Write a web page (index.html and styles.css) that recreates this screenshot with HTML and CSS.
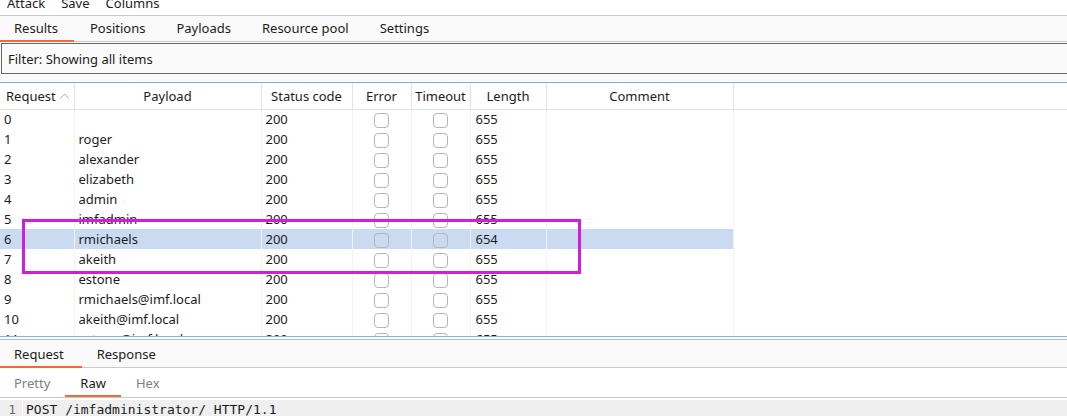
FILE: index.html
```html
<!DOCTYPE html>
<html>
<head>
<meta charset="utf-8">
<link rel="stylesheet" href="styles.css">
</head>
<body>
<div class="menubar">
  <div class="menu-inner">
    <span class="menu-item">Attack</span>
    <span class="menu-item">Save</span>
    <span class="menu-item">Columns</span>
  </div>
</div>
<div class="tabs top-tabs">
  <span class="tab active">Results</span>
  <span class="tab">Positions</span>
  <span class="tab">Payloads</span>
  <span class="tab">Resource pool</span>
  <span class="tab">Settings</span>
</div>
<div class="filter-area">
  <div class="filter">Filter: Showing all items</div>
</div>
<div class="table-wrap">
  <table class="results">
    <colgroup>
      <col class="c-req"><col class="c-pay"><col class="c-status"><col class="c-err"><col class="c-to"><col class="c-len"><col class="c-com"><col>
    </colgroup>
    <thead>
      <tr>
        <th class="left">Request <svg class="sort" width="9" height="6" viewBox="0 0 9 6"><path d="M0.5 5.5 L4.5 1 L8.5 5.5" fill="none" stroke="#a8a8a8" stroke-width="1"/></svg></th>
        <th>Payload</th>
        <th>Status code</th>
        <th>Error</th>
        <th>Timeout</th>
        <th>Length</th>
        <th>Comment</th>
        <th class="filler"></th>
      </tr>
    </thead>
    <tbody>
      <tr><td>0</td><td></td><td>200</td><td class="cb"><span class="box"></span></td><td class="cb"><span class="box"></span></td><td class="len">655</td><td></td><td class="filler"></td></tr>
      <tr><td>1</td><td>roger</td><td>200</td><td class="cb"><span class="box"></span></td><td class="cb"><span class="box"></span></td><td class="len">655</td><td></td><td class="filler"></td></tr>
      <tr><td>2</td><td>alexander</td><td>200</td><td class="cb"><span class="box"></span></td><td class="cb"><span class="box"></span></td><td class="len">655</td><td></td><td class="filler"></td></tr>
      <tr><td>3</td><td>elizabeth</td><td>200</td><td class="cb"><span class="box"></span></td><td class="cb"><span class="box"></span></td><td class="len">655</td><td></td><td class="filler"></td></tr>
      <tr><td>4</td><td>admin</td><td>200</td><td class="cb"><span class="box"></span></td><td class="cb"><span class="box"></span></td><td class="len">655</td><td></td><td class="filler"></td></tr>
      <tr><td>5</td><td>imfadmin</td><td>200</td><td class="cb"><span class="box"></span></td><td class="cb"><span class="box"></span></td><td class="len">655</td><td></td><td class="filler"></td></tr>
      <tr class="selected"><td>6</td><td>rmichaels</td><td>200</td><td class="cb"><span class="box"></span></td><td class="cb"><span class="box"></span></td><td class="len">654</td><td></td><td class="filler"></td></tr>
      <tr><td>7</td><td>akeith</td><td>200</td><td class="cb"><span class="box"></span></td><td class="cb"><span class="box"></span></td><td class="len">655</td><td></td><td class="filler"></td></tr>
      <tr><td>8</td><td>estone</td><td>200</td><td class="cb"><span class="box"></span></td><td class="cb"><span class="box"></span></td><td class="len">655</td><td></td><td class="filler"></td></tr>
      <tr><td>9</td><td>rmichaels@imf.local</td><td>200</td><td class="cb"><span class="box"></span></td><td class="cb"><span class="box"></span></td><td class="len">655</td><td></td><td class="filler"></td></tr>
      <tr><td>10</td><td>akeith@imf.local</td><td>200</td><td class="cb"><span class="box"></span></td><td class="cb"><span class="box"></span></td><td class="len">655</td><td></td><td class="filler"></td></tr>
      <tr><td>11</td><td>estone@imf.local</td><td>200</td><td class="cb"><span class="box"></span></td><td class="cb"><span class="box"></span></td><td class="len">655</td><td></td><td class="filler"></td></tr>
    </tbody>
  </table>
  <div class="mark"></div>
</div>
<div class="tabs bottom-tabs">
  <span class="tab active">Request</span>
  <span class="tab">Response</span>
</div>
<div class="subtabs">
  <span class="subtab muted">Pretty</span>
  <span class="subtab active">Raw</span>
  <span class="subtab muted">Hex</span>
</div>
<div class="code">
  <span class="gutter">1</span>
  <span class="code-text">POST /imfadministrator/ HTTP/1.1</span>
</div>
</body>
</html>
```

FILE: styles.css
```css
* { box-sizing: border-box; }
html, body {
  margin: 0;
  padding: 0;
  background: #ffffff;
  font-family: "Noto Sans", "Open Sans", sans-serif;
  font-size: 12px;
  color: #1c1c1c;
  overflow: hidden;
}
.menubar {
  height: 16px;
  overflow: hidden;
  border-bottom: 1px solid #c9c9c9;
  background: #ffffff;
}
.menu-inner {
  display: flex;
  margin-top: -7px;
  padding-left: 7px;
  gap: 16px;
  line-height: 20px;
  font-size: 13px;
}
.tabs {
  display: flex;
  height: 26px;
  background: #fafafa;
  border-bottom: 1px solid #c9c9c9;
}
.tab {
  display: flex;
  align-items: center;
  padding: 0 15px 0 16px;
  font-size: 13px;
  border-bottom: 2px solid transparent;
  margin-bottom: -1px;
}
.tabs .tab:first-child { padding-left: 14px; padding-right: 16px; }
.tab.active { border-bottom-color: #f26a3a; }
.filter-area {
  background: #fafafa;
  padding: 1px 0 8px 1px;
  border-bottom: 1px solid #7fb0df;
}
.filter {
  height: 31px;
  border: 1px solid #686868;
  border-right: none;
  display: flex;
  align-items: center;
  padding-left: 6px;
  font-size: 13px;
  background: #fafafa;
}
.table-wrap {
  position: relative;
  height: 254px;
  overflow: hidden;
  border-bottom: 1px solid #7fb0df;
}
table.results {
  width: 100%;
  border-collapse: collapse;
  table-layout: fixed;
}
col.c-req { width: 74px; }
col.c-pay { width: 187px; }
col.c-status { width: 91px; }
col.c-err { width: 59px; }
col.c-to { width: 59px; }
col.c-len { width: 76px; }
col.c-com { width: 187px; }
th {
  height: 26px;
  font-weight: normal;
  font-size: 13px;
  text-align: center;
  border-right: 1px solid #e3e3e3;
  border-bottom: 1px solid #e3e3e3;
  padding: 0;
  white-space: nowrap;
}
th.left { text-align: left; padding-left: 6px; }
th.filler { border-right: none; }
.sort { margin-left: 1px; vertical-align: 2px; }
td {
  height: 20px;
  padding: 0 0 0 4px;
  font-size: 13px;
  border-right: 1px solid #f3f3f3;
  white-space: nowrap;
  overflow: hidden;
}
td.filler { border-right: none; }
td.len { padding-left: 5px; }
td.cb { padding: 0; text-align: center; }
.box {
  display: inline-block;
  width: 15px;
  height: 15px;
  border: 1px solid #b5b5b5;
  border-radius: 4px;
  vertical-align: middle;
  margin-top: -1px;
}
tr.selected td { background: #cadbf1; }
tr.selected td.filler { background: transparent; }
.mark {
  position: absolute;
  left: 22px;
  top: 136px;
  width: 559px;
  height: 55px;
  border: 3px solid #d41cdb;
}
.bottom-tabs {
  margin-top: 2px;
  border-top: 1px solid #bcbcbc;
  height: 29px;
}
.bottom-tabs .tab { padding-top: 2px; }
.bottom-tabs .tab:first-child { padding-right: 18px; }
.bottom-tabs .tab + .tab { padding-left: 15px; }
.subtabs {
  display: flex;
  height: 30px;
  border-bottom: 1px solid #c9c9c9;
}
.subtab {
  display: flex;
  align-items: center;
  padding: 3px 15px 0 15px;
  font-size: 13px;
  border-bottom: 2px solid transparent;
}
.subtabs .subtab:first-child { padding-left: 14px; padding-right: 15px; }
.subtabs .subtab:last-child { padding-left: 15px; }
.subtab.muted { color: #808080; }
.subtab.active { border-bottom-color: #f26a3a; }
.code {
  margin-top: 2px;
  background: #efefef;
  height: 20px;
  display: flex;
  align-items: center;
  padding-bottom: 1px;
  font-family: "DejaVu Sans Mono", monospace;
  font-size: 13px;
}
.gutter {
  width: 23px;
  padding-right: 6px;
  color: #6a6a6a;
  border-right: 1px solid #fafafa;
  align-self: stretch;
  display: flex;
  align-items: center;
  justify-content: flex-end;
}
.code-text { padding-left: 3px; color: #1c1c1c; }
```
